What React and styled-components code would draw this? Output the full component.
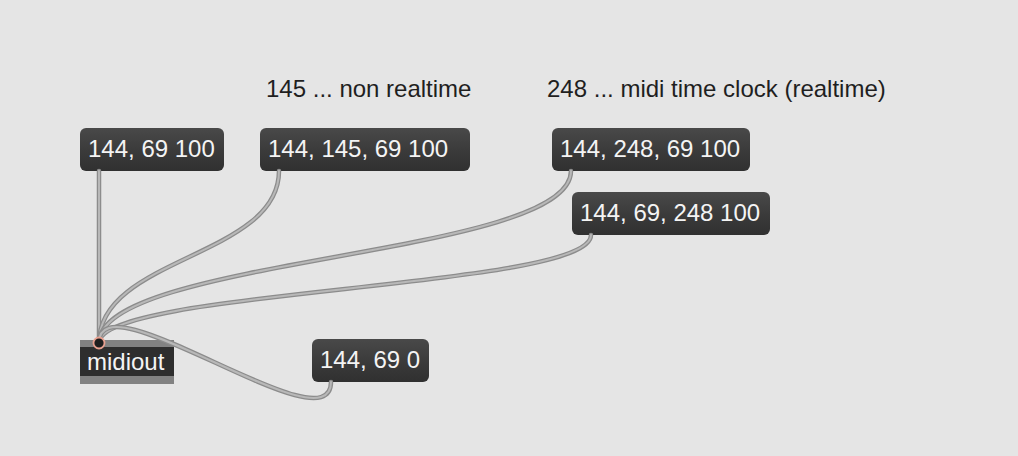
import React from "react"
import styled, { createGlobalStyle } from "styled-components"

const GlobalStyle = createGlobalStyle`
  html, body {
    margin: 0;
    padding: 0;
    background: #e5e5e5;
  }
  body {
    font-family: "Liberation Sans", Arial, sans-serif;
  }
`

const Patcher = styled.div`
  position: relative;
  width: 1018px;
  height: 456px;
  overflow: hidden;
  background: #e5e5e5;
`

const Comment = styled.div`
  position: absolute;
  left: ${p => p.$x}px;
  top: ${p => p.$y}px;
  font-size: 24px;
  line-height: 26px;
  color: #1f1f1f;
  white-space: nowrap;
`

const Message = styled.div`
  position: absolute;
  left: ${p => p.$x}px;
  top: ${p => p.$y}px;
  width: ${p => p.$w}px;
  height: 43px;
  box-sizing: border-box;
  padding-left: 8px;
  border-radius: 6px;
  background: linear-gradient(to bottom, #494949 0%, #3a3a3a 55%, #303030 100%);
  color: #f4f4f4;
  font-size: 24px;
  line-height: 42px;
  white-space: nowrap;
`

const ObjectBox = styled.div`
  position: absolute;
  left: ${p => p.$x}px;
  top: ${p => p.$y}px;
  width: ${p => p.$w}px;
  display: flex;
  flex-direction: column;
`

const ObjectBar = styled.div`
  height: ${p => p.$h}px;
  background: #828282;
`

const ObjectLabel = styled.div`
  height: 29px;
  background: #2e2e2e;
  color: #f4f4f4;
  font-size: 24px;
  line-height: 30px;
  padding-left: 7px;
  white-space: nowrap;
`

const CordLayer = styled.svg`
  position: absolute;
  left: 0;
  top: 0;
  pointer-events: none;
`

const inlet = { x: 99, y: 343 }

const messages = [
  { text: "144, 69 100", x: 80, y: 128, w: 144 },
  { text: "144, 145, 69 100", x: 260, y: 128, w: 210 },
  { text: "144, 248, 69 100", x: 552, y: 128, w: 198 },
  { text: "144, 69, 248 100", x: 572, y: 192, w: 198 },
  { text: "144, 69 0", x: 312, y: 339, w: 117 },
]

const cordPath = (x1, y1, x2, y2) => {
  const dy = y2 - y1
  const k = dy > 0 ? Math.max(dy * 0.5, 20) : 68
  return `M${x1} ${y1} C${x1} ${y1 + k} ${x2} ${y2 - k} ${x2} ${y2}`
}

const Cords = () => (
  <CordLayer width="1018" height="456">
    {messages.map(m => {
      const d = cordPath(m.x + 19, m.y + 43, inlet.x, inlet.y)
      return (
        <g key={m.text} fill="none" strokeLinecap="round">
          <path d={d} stroke="#8c8c8c" strokeWidth="4.5" />
          <path d={d} stroke="#b8b8b8" strokeWidth="2" />
        </g>
      )
    })}
    <circle cx={inlet.x} cy={inlet.y} r="5.5" fill="#1e1e1e" stroke="#e8a090" strokeWidth="1.8" />
  </CordLayer>
)

export default function App() {
  return (
    <>
      <GlobalStyle />
      <Patcher>
        <Comment $x={266} $y={76}>145 ... non realtime</Comment>
        <Comment $x={547} $y={76}>248 ... midi time clock (realtime)</Comment>
        {messages.map(m => (
          <Message key={m.text} $x={m.x} $y={m.y} $w={m.w}>
            {m.text}
          </Message>
        ))}
        <ObjectBox $x={80} $y={340} $w={94}>
          <ObjectBar $h={7} />
          <ObjectLabel>midiout</ObjectLabel>
          <ObjectBar $h={8} />
        </ObjectBox>
        <Cords />
      </Patcher>
    </>
  )
}
